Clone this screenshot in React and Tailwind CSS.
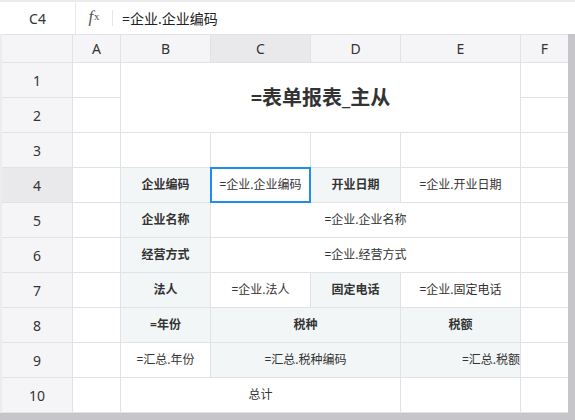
import React from "react";

const font = {
  fontFamily: '"Noto Sans", "Noto Sans CJK SC", sans-serif',
};

const cols = ["A", "B", "C", "D", "E", "F"];

// one grid cell; kind = blank | label | value
function Cell({ children, kind = "value", span = "", align = "justify-center", extra = "" }) {
  const bg = kind === "label" || kind === "tinted" ? "bg-[#f3f6f7]" : "bg-white";
  const weight = kind === "label" ? "font-bold" : "";
  return (
    <div className={`${bg} ${span} ${extra} flex items-center ${align} text-[12px] text-[#333] ${weight}`}>
      {children}
    </div>
  );
}

function RowHead({ n, active }) {
  return (
    <div
      className={`${active ? "bg-[#e9e9ec]" : "bg-[#f5f5f7]"} flex items-center justify-center text-[14px] text-[#333]`}>
      {n}
    </div>
  );
}

export default function App() {
  return (
    <div className="w-[575px] h-[420px] overflow-hidden bg-white flex flex-col" style={font}>
      <div className="h-[2px] bg-[#ebebee]" />

      {/* formula bar */}
      <div className="h-[32px] flex items-center bg-white">
        <div className="w-[76px] h-full flex items-center justify-center text-[14px] text-[#333] border-r border-[#e8e8ea]">
          C4
        </div>
        <div className="w-[36px] flex items-center justify-center pb-[3px]">
          <span
            className="text-[17px] italic text-[#555] leading-none"
            style={{ fontFamily: '"Liberation Serif", serif' }}>
            f
          </span>
          <span
            className="text-[11px] text-[#555] leading-none ml-[1px]"
            style={{ fontFamily: '"Liberation Serif", serif' }}>
            x
          </span>
        </div>
        <div className="w-px h-[16px] bg-[#e6e6e8]" />
        <div className="pl-[9px] text-[14px] text-[#222]">=企业.企业编码</div>
      </div>

      <div className="flex">
        <div className="w-[2px] bg-[#ececef]" />
        {/* sheet grid */}
        <div className="grid grid-cols-[70px_47px_89px_99px_89px_119px_47px] grid-rows-[27px_repeat(10,34px)] gap-px bg-[#e2e2e6] pt-px pb-px">
          <div className="bg-[#f5f5f7]" />
          {cols.map((c) => (
            <div
              key={c}
              className={`${c === "C" ? "bg-[#e9e9ec]" : "bg-[#f5f5f7]"} flex items-center justify-center text-[14px] text-[#333]`}>
              {c}
            </div>
          ))}

          {/* 1-2 */}
          <RowHead n={1} />
          <Cell />
          <Cell span="col-span-4 row-span-2" extra="text-[20px]! font-bold text-[#333]">
            =表单报表_主从
          </Cell>
          <Cell />
          <RowHead n={2} />
          <Cell />
          <Cell />

          {/* 3 */}
          <RowHead n={3} />
          <Cell />
          <Cell />
          <Cell />
          <Cell />
          <Cell />
          <Cell />

          {/* 4 */}
          <RowHead n={4} active />
          <Cell />
          <Cell kind="label">企业编码</Cell>
          <Cell extra="relative z-10 outline-2 outline-[#1e8cf0] outline-offset-[-1px]">=企业.企业编码</Cell>
          <Cell kind="label">开业日期</Cell>
          <Cell>=企业.开业日期</Cell>
          <Cell />

          {/* 5 */}
          <RowHead n={5} />
          <Cell />
          <Cell kind="label">企业名称</Cell>
          <Cell span="col-span-3">=企业.企业名称</Cell>
          <Cell />

          {/* 6 */}
          <RowHead n={6} />
          <Cell />
          <Cell kind="label">经营方式</Cell>
          <Cell span="col-span-3">=企业.经营方式</Cell>
          <Cell />

          {/* 7 */}
          <RowHead n={7} />
          <Cell />
          <Cell kind="label">法人</Cell>
          <Cell>=企业.法人</Cell>
          <Cell kind="label">固定电话</Cell>
          <Cell>=企业.固定电话</Cell>
          <Cell />

          {/* 8 */}
          <RowHead n={8} />
          <Cell />
          <Cell kind="label">=年份</Cell>
          <Cell kind="label" span="col-span-2">税种</Cell>
          <Cell kind="label">税额</Cell>
          <Cell />

          {/* 9 */}
          <RowHead n={9} />
          <Cell />
          <Cell>=汇总.年份</Cell>
          <Cell kind="tinted" span="col-span-2">=汇总.税种编码</Cell>
          <Cell kind="tinted" align="justify-end">=汇总.税额</Cell>
          <Cell />

          {/* 10 */}
          <RowHead n={10} />
          <Cell />
          <Cell span="col-span-3">总计</Cell>
          <Cell />
          <Cell />
        </div>
        <div className="flex-1 bg-[#c6c6ca]" />
      </div>
      <div className="flex-1 bg-[#c6c6ca]" />
    </div>
  );
}
